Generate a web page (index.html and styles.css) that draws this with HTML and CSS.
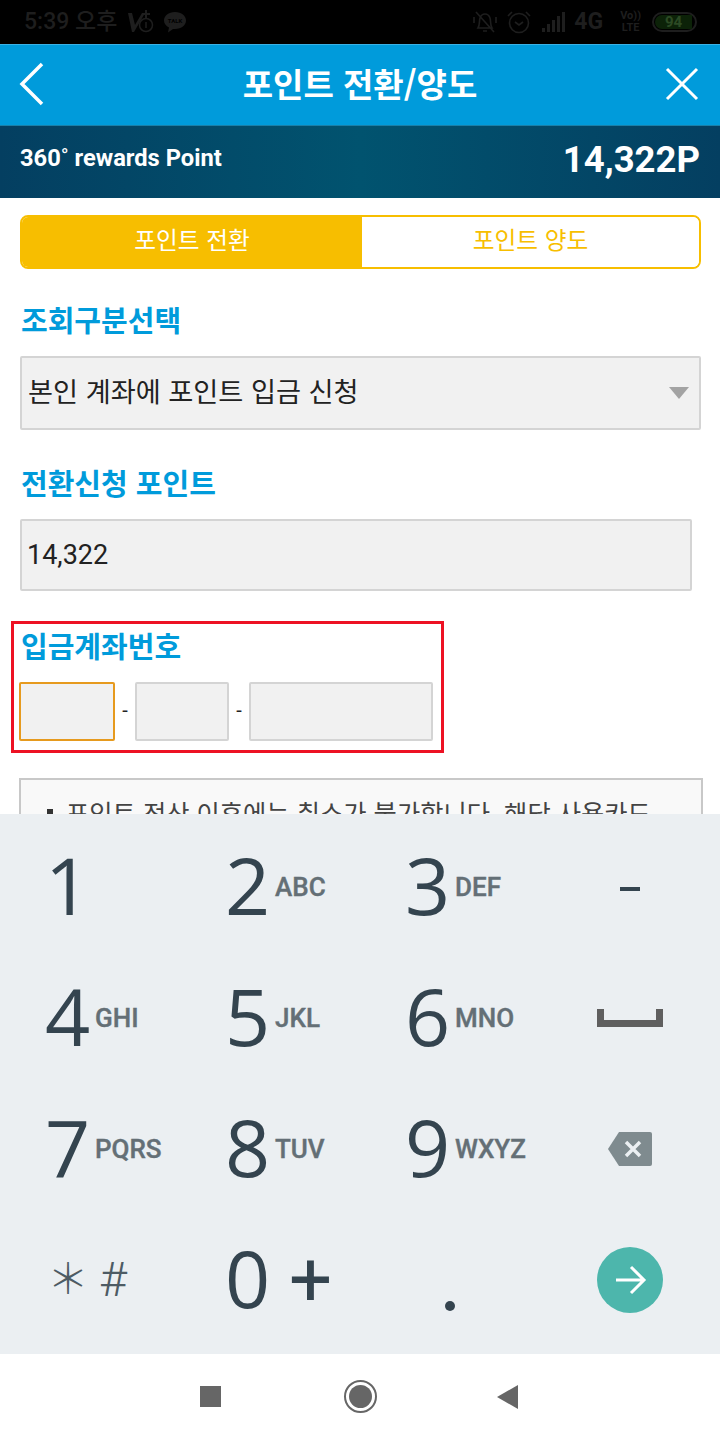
FILE: index.html
```html
<!DOCTYPE html>
<html lang="ko">
<head>
<meta charset="utf-8">
<title>포인트 전환/양도</title>
<link rel="stylesheet" href="styles.css">
</head>
<body>
<div class="phone">
  <div class="status">
    <div class="status-group">
      <span class="clock">5:39 오후</span>
      <svg class="ic-v" width="28" height="28" viewBox="0 0 28 28"><path d="M2 5h4l3 12 7-12h3L8 24H6z" fill="#1e1e1e"/><path d="M20 2v8M16 6h8" stroke="#1e1e1e" stroke-width="2"/><circle cx="20" cy="17" r="6.5" fill="none" stroke="#1e1e1e" stroke-width="1.5"/><path d="M20 14v6" stroke="#1e1e1e" stroke-width="1.5"/></svg>
      <svg class="ic-talk" width="24" height="26" viewBox="0 0 24 26"><path d="M12 3C5.500 3 1 7 1 11.500c0 3 2 5.500 5 7l-1 5 5-3.600c.7.100 1.300.100 2 .100 6.500 0 11-4 11-8.500S18.500 3 12 3z" fill="#1e1e1e"/><text x="12" y="14" class="talk-text">TALK</text></svg>
    </div>
    <div class="status-group right">
      <svg width="24" height="26" viewBox="0 0 24 26" fill="none" stroke="#1e1e1e" stroke-width="1.600"><path d="M5 19c2-3 1-7 2-10s3-4 5-4 4 1 5 4 0 7 2 10zM10 22h4M3 3l18 20M1 8v6M23 8v6"/></svg>
      <svg width="26" height="26" viewBox="0 0 26 26" fill="none" stroke="#1e1e1e" stroke-width="1.600"><circle cx="13" cy="14" r="9.500"/><path d="M9 13l4 3 4-3M2 7l4-4M24 7l-4-4"/></svg>
      <svg width="26" height="22" viewBox="0 0 26 22" fill="#1e1e1e"><path d="M1 17h3v4H1zM6 13h3v8H6zM11 9h3v12h-3zM16 5h3v16h-3zM21 1h3v20h-3z"/></svg>
      <span class="net">4G</span>
      <span class="volte">Vo))<br>LTE</span>
      <span class="battery"><span class="battery-fill">94</span></span>
    </div>
  </div>

  <header class="topbar">
    <span class="bar-slot">
      <svg width="28" height="44" viewBox="0 0 28 44" fill="none" stroke="#fff" stroke-width="3.500"><path d="M24 2L4 22l20 20"/></svg>
    </span>
    <h1 class="title">포인트 전환/양도</h1>
    <span class="bar-slot bar-slot-end">
      <svg width="34" height="34" viewBox="0 0 34 34" fill="none" stroke="#fff" stroke-width="3"><path d="M2 2l30 30M32 2L2 32"/></svg>
    </span>
  </header>

  <div class="pointbar">
    <span class="point-label">360˚ rewards Point</span>
    <span class="point-value">14,322P</span>
  </div>

  <main class="content">
    <div class="tabs">
      <div class="tab tab-on">포인트 전환</div>
      <div class="tab tab-off">포인트 양도</div>
    </div>

    <div class="label">조회구분선택</div>
    <div class="field select">
      <span>본인 계좌에 포인트 입금 신청</span>
      <span class="caret"></span>
    </div>

    <div class="label label-second">전환신청 포인트</div>
    <div class="field amount">14,322</div>

    <section class="account">
      <div class="label label-account">입금계좌번호</div>
      <div class="account-row">
        <div class="box box-focus"></div>
        <span class="dash">-</span>
        <div class="box box-mid"></div>
        <span class="dash">-</span>
        <div class="box box-wide"></div>
      </div>
    </section>

    <div class="notice">
      <p class="notice-line"><span class="bullet"></span>포인트 전산 이후에는 취소가 불가합니다. 해당 사용카드</p>
    </div>
  </main>

  <div class="keyboard">
    <div class="key"><span class="digit">1</span></div>
    <div class="key"><span class="digit">2</span><span class="sub">ABC</span></div>
    <div class="key"><span class="digit">3</span><span class="sub">DEF</span></div>
    <div class="key key-fn"><span class="minus"></span></div>

    <div class="key"><span class="digit">4</span><span class="sub">GHI</span></div>
    <div class="key"><span class="digit">5</span><span class="sub">JKL</span></div>
    <div class="key"><span class="digit">6</span><span class="sub">MNO</span></div>
    <div class="key key-fn">
      <svg width="66" height="18" viewBox="0 0 66 18" fill="#5f5f5f"><path d="M0 0h7v11h52V0h7v18H0z"/></svg>
    </div>

    <div class="key"><span class="digit">7</span><span class="sub">PQRS</span></div>
    <div class="key"><span class="digit">8</span><span class="sub">TUV</span></div>
    <div class="key"><span class="digit">9</span><span class="sub">WXYZ</span></div>
    <div class="key key-fn">
      <svg width="44" height="34" viewBox="0 0 44 34"><path d="M11 0h31a2 2 0 0 1 2 2v30a2 2 0 0 1-2 2H11L0 17z" fill="#7f8b8f"/><path d="M18 10l14 14M32 10L18 24" stroke="#ebeff2" stroke-width="3.500" fill="none"/></svg>
    </div>

    <div class="key key-sym"><span class="sym">＊</span><span class="sym sym-hash">#</span></div>
    <div class="key"><span class="digit">0</span><span class="plus">+</span></div>
    <div class="key key-dot"><span class="dot"></span></div>
    <div class="key key-fn">
      <span class="go">
        <svg width="34" height="32" viewBox="0 0 34 32" fill="none" stroke="#fff" stroke-width="3"><path d="M3 16h28M18 3l13 13-13 13"/></svg>
      </span>
    </div>
  </div>

  <nav class="navbar">
    <span class="nav-square"></span>
    <span class="nav-circle"><span class="nav-circle-in"></span></span>
    <svg width="22" height="24" viewBox="0 0 22 24"><path d="M0 12L21 0v24z" fill="#666"/></svg>
  </nav>
</div>
</body>
</html>
```
FILE: styles.css
```css
* { box-sizing: border-box; }
html, body { margin: 0; padding: 0; background: #fff; }
body { font-family: "Noto Sans CJK KR", "Noto Sans", sans-serif; }

.phone {
  width: 720px;
  height: 1440px;
  display: flex;
  flex-direction: column;
  overflow: hidden;
}

/* status bar */
.status {
  height: 44px;
  flex: none;
  background: #000;
  color: #1e1e1e;
  display: flex;
  justify-content: space-between;
  align-items: center;
  padding: 0 23px 1px 24px;
}
.status-group { display: flex; align-items: center; gap: 9px; }
.clock { font: 500 23px/1 Roboto, "Noto Sans CJK KR", sans-serif; }
.talk-text { font: 700 6px Roboto, sans-serif; fill: #000; text-anchor: middle; }
.net { font: 700 23px/1 Roboto, sans-serif; margin-left: -2px; }
.volte { font: 700 11px/12px Roboto, sans-serif; text-align: center; margin-left: 8px; }
.battery {
  width: 45px;
  height: 20px;
  border: 2px solid #1e1e1e;
  border-radius: 10px;
  padding: 1px;
  display: flex;
  margin-left: 2px;
}
.battery-fill {
  width: 37px;
  border-radius: 7px 0 0 7px;
  background: #0c2208;
  color: #2c4a24;
  font: 700 15px/14px Roboto, sans-serif;
  text-align: center;
}

/* header */
.topbar {
  height: 81px;
  flex: none;
  background: #009bdb;
  border-top: 1px solid #3bb2e6;
  display: flex;
  align-items: center;
  padding: 0 21px 2px 18px;
}
.bar-slot { width: 60px; flex: none; display: flex; }
.bar-slot-end { justify-content: flex-end; }
.title {
  flex: 1;
  margin: 0 0 3px;
  padding-left: 3px;
  text-align: center;
  color: #fff;
  font-size: 33px;
  font-weight: 700;
  line-height: 44px;
}

.pointbar {
  height: 73px;
  flex: none;
  background: linear-gradient(90deg, #043f61 0%, #01536f 50%, #043f61 100%);
  border-top: 1px solid #1a7fa8;
  display: flex;
  justify-content: space-between;
  align-items: center;
  padding: 0 20px 5px;
  color: #fff;
}
.point-label { font: 700 23.700px/30px Roboto, sans-serif; margin-bottom: 4px; }
.point-value { font: 700 36.500px/44px Roboto, sans-serif; }

/* content */
.content {
  height: 616px;
  flex: none;
  padding: 17px 0 0 20px;
  overflow: hidden;
  background: #fff;
}
.tabs {
  width: 681px;
  height: 54px;
  display: flex;
  border: 2px solid #f7be00;
  border-radius: 8px;
  overflow: hidden;
  font-size: 23.700px;
  line-height: 44px;
  text-align: center;
}
.tab { height: 50px; }
.tab-on { width: 340px; background: #f7be00; color: #fff; }
.tab-off { flex: 1; background: #fff; color: #f7be00; }

.label {
  margin-top: 30px;
  height: 40px;
  margin-left: 1px;
  color: #009bdb;
  font-size: 29px;
  font-weight: 700;
  line-height: 40px;
}
.label-second { margin-top: 32px; }
.label-account { margin: -2px 0 17px 2px; }
.label + .field { margin-top: 17px; }

.field {
  background: #f1f1f1;
  border: 2px solid #d4d4d4;
  border-radius: 2px;
  color: #222;
}
.select {
  width: 681px;
  height: 74px;
  display: flex;
  align-items: center;
  justify-content: space-between;
  padding: 0 10px 0 6px;
  font-size: 27.200px;
  line-height: 64px;
}
.select span:first-child { margin-bottom: 6px; }
.caret {
  width: 0;
  height: 0;
  border-left: 10px solid transparent;
  border-right: 10px solid transparent;
  border-top: 12px solid #a3a3a3;
}
.amount {
  width: 672px;
  height: 72px;
  padding-left: 5px;
  font: 400 27px/68px Roboto, sans-serif;
}

.account {
  width: 433px;
  height: 132px;
  margin: 30px 0 25px -9px;
  border: 3px solid #ed1123;
  padding: 3px 0 0 5px;
}
.account-row { display: flex; align-items: center; }
.box {
  height: 59px;
  background: #f1f1f1;
  border: 2px solid #d4d4d4;
  border-radius: 2px;
}
.box-focus { width: 96px; border-color: #e69a1e; }
.box-mid { width: 94px; }
.box-wide { width: 184px; }
.dash {
  width: 20px;
  text-align: center;
  font: 400 20px/1 Roboto, sans-serif;
  color: #222;
  margin-top: -4px;
}

.notice {
  width: 684px;
  height: 120px;
  margin-left: -1px;
  background: #f9f9f9;
  border: 2px solid #c8c8c8;
  padding: 15px 0 0 26px;
}
.notice-line {
  margin: 0;
  color: #444;
  font-size: 25.300px;
  line-height: 34px;
  white-space: nowrap;
  display: flex;
  align-items: center;
}
.bullet {
  width: 6px;
  height: 6px;
  background: #333;
  margin-right: 13px;
  flex: none;
}

/* keyboard */
.keyboard {
  height: 540px;
  flex: none;
  background: #ebeff2;
  padding: 7px 0 9px;
  display: grid;
  grid-template-columns: repeat(4, 180px);
  grid-template-rows: repeat(4, 131px);
}
.key {
  display: flex;
  align-items: center;
  padding-left: 45px;
  color: #34444f;
}
.key-fn { justify-content: center; padding: 0; }
.digit {
  width: 50px;
  margin-top: -5px;
  font: 400 79px/1 "Open Sans", Roboto, sans-serif;
  color: #34444f;
}
.sub {
  font: 500 26px/1 Roboto, sans-serif;
  -webkit-text-stroke: 0.4px #646f76;
  color: #646f76;
}
.minus { width: 20px; height: 4px; margin-top: 4px; background: #34444f; }
.plus { font: 400 76px/1 Roboto, sans-serif; margin-left: 14px; color: #34444f; }
.key-sym { padding-left: 47px; gap: 10px; }
.sym { font: 300 42px/1 Roboto, "Noto Sans CJK KR", sans-serif; color: #4d5b64; }
.sym-hash { font-size: 48px; }
.key-dot { align-items: flex-end; padding: 0 0 34px 85px; }
.dot { width: 10px; height: 10px; border-radius: 50%; background: #34444f; }
.go {
  width: 66px;
  height: 66px;
  border-radius: 50%;
  background: #4db6ac;
  display: flex;
  align-items: center;
  justify-content: center;
}

/* nav bar */
.navbar {
  height: 86px;
  flex: none;
  background: #fff;
  display: flex;
  align-items: center;
  padding-left: 200px;
  padding-bottom: 1px;
}
.nav-square { width: 21px; height: 21px; background: #666; }
.nav-circle {
  width: 33px;
  height: 33px;
  margin-left: 123px;
  margin-right: 120px;
  border-radius: 50%;
  border: 2px solid #666;
  display: flex;
  align-items: center;
  justify-content: center;
}
.nav-circle-in { width: 23px; height: 23px; border-radius: 50%; background: #666; }
```
